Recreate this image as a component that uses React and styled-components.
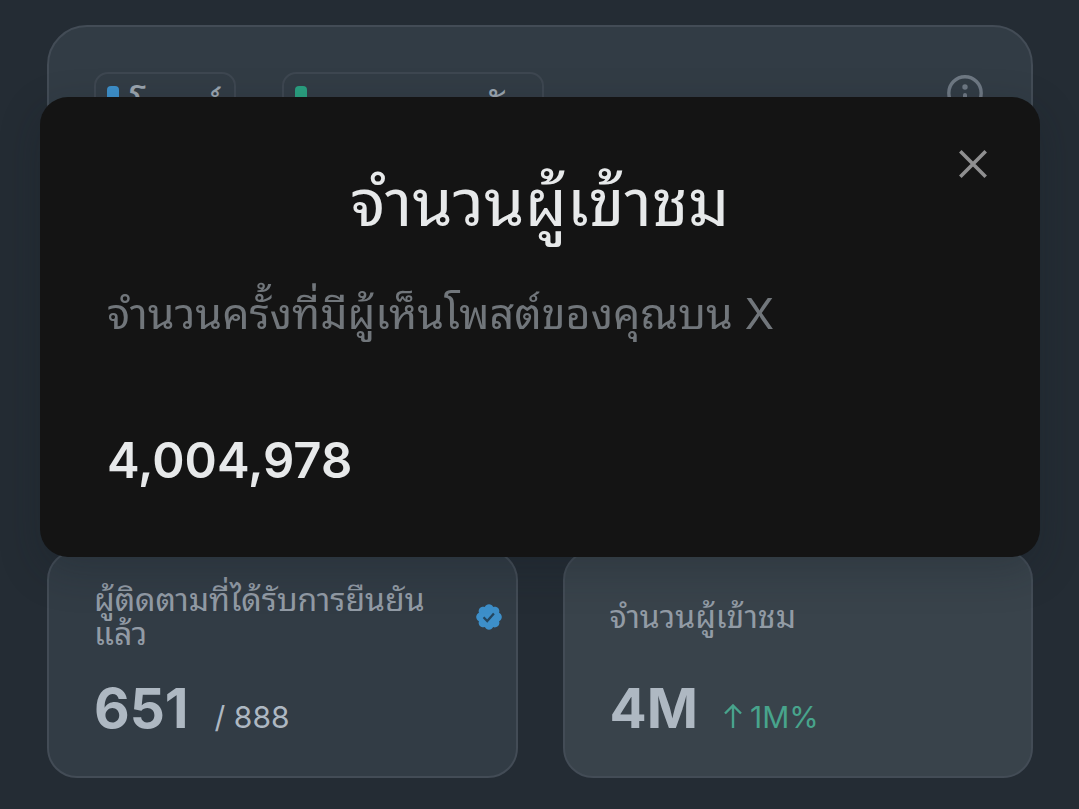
import React, { useState } from "react";
import styled, { createGlobalStyle } from "styled-components";

const App = () => {
  const [isOpen, setOpen] = useState(true);

  return (
    <>
      <GlobalStyle />
      <Page>
        <ChartCard>
          <Legend>
            <Chip>
              <Swatch $color="#3d8fc9" />
              โพสต์
            </Chip>
            <Chip>
              <Swatch $color="#2a9f7f" />
              การตอบกลับ
            </Chip>
          </Legend>
          <InfoButton aria-label="ข้อมูล">
            <InfoIcon />
          </InfoButton>
        </ChartCard>
        <Stats>
          <StatCard>
            <StatHead>
              <StatLabel>ผู้ติดตามที่ได้รับการยืนยันแล้ว</StatLabel>
              <VerifiedBadge />
            </StatHead>
            <StatRow>
              <StatValue>651</StatValue>
              <StatNote>/ 888</StatNote>
            </StatRow>
          </StatCard>
          <StatCard $active>
            <StatHead>
              <StatLabel>จำนวนผู้เข้าชม</StatLabel>
            </StatHead>
            <StatRow>
              <StatValue>4M</StatValue>
              <StatNote $up>
                <ArrowUp />
                1M%
              </StatNote>
            </StatRow>
          </StatCard>
        </Stats>
      </Page>
      {isOpen && (
        <Overlay>
          <Modal role="dialog" aria-labelledby="modal-title">
            <CloseButton aria-label="ปิด" onClick={() => setOpen(false)}>
              <CloseIcon />
            </CloseButton>
            <ModalTitle id="modal-title">จำนวนผู้เข้าชม</ModalTitle>
            <ModalText>จำนวนครั้งที่มีผู้เห็นโพสต์ของคุณบน X</ModalText>
            <ModalValue>4,004,978</ModalValue>
          </Modal>
        </Overlay>
      )}
    </>
  );
};
export default App;

const InfoIcon = () => (
  <svg width="36" height="36" viewBox="0 0 36 36" fill="none">
    <circle cx="18" cy="18" r="16.2" stroke="currentColor" strokeWidth="3.4" />
    <circle cx="18" cy="12" r="2.7" fill="currentColor" />
    <path
      d="M18 20v7"
      stroke="currentColor"
      strokeWidth="4"
      strokeLinecap="round"
    />
  </svg>
);

const CloseIcon = () => (
  <svg width="28" height="28" viewBox="0 0 28 28" fill="none">
    <path d="M1.3 1.3l25.4 25.4M26.7 1.3L1.3 26.7" stroke="currentColor" strokeWidth="3.6" />
  </svg>
);

const ArrowUp = () => (
  <svg width="18" height="24" viewBox="0 0 18 24" fill="none">
    <path
      d="M9 24V1.5M1 9.5l8-8 8 8"
      stroke="currentColor"
      strokeWidth="2.4"
    />
  </svg>
);

const VerifiedBadge = () => (
  <Badge viewBox="0 0 22 22">
    <path
      fill="#3d8fc9"
      d="M20.396 11c-.018-.646-.215-1.275-.57-1.816-.354-.54-.852-.972-1.438-1.246.223-.607.27-1.264.14-1.897-.131-.634-.437-1.218-.882-1.687-.47-.445-1.053-.75-1.687-.882-.633-.13-1.29-.083-1.897.14-.273-.587-.704-1.086-1.245-1.44S11.647 1.62 11 1.604c-.646.017-1.273.213-1.813.568s-.969.854-1.24 1.44c-.608-.223-1.267-.272-1.902-.14-.635.13-1.22.436-1.69.882-.445.47-.749 1.055-.878 1.688-.13.633-.08 1.29.144 1.896-.587.274-1.087.705-1.443 1.245-.356.54-.555 1.17-.574 1.817.02.647.218 1.276.574 1.817.356.54.856.972 1.443 1.245-.224.606-.274 1.263-.144 1.896.13.634.433 1.218.877 1.688.47.443 1.054.747 1.687.878.633.132 1.29.084 1.897-.136.274.586.705 1.084 1.246 1.439.54.354 1.17.551 1.816.569.647-.016 1.276-.213 1.817-.567s.972-.854 1.245-1.44c.604.239 1.266.296 1.903.164.636-.132 1.22-.447 1.68-.907.46-.46.776-1.044.908-1.681s.075-1.299-.165-1.903c.586-.274 1.084-.705 1.439-1.246.354-.54.551-1.17.569-1.816z"
    />
    <path
      d="M7 11.2l2.7 2.7 4.9-5.4"
      fill="none"
      stroke="#24465f"
      strokeWidth="1.7"
    />
  </Badge>
);

const GlobalStyle = createGlobalStyle`
  * {
    box-sizing: border-box;
  }
  body {
    margin: 0;
    background: #242c34;
    font-family: Inter, "Noto Sans Thai Looped", "Noto Sans Thai", "Noto Sans", sans-serif;
  }
  button {
    display: flex;
    padding: 0;
    border: 0;
    background: none;
    cursor: pointer;
  }
`;

const Page = styled.main`
  display: flex;
  flex-direction: column;
  gap: 45px;
  padding: 25px 46px 31px 47px;
`;

const ChartCard = styled.section`
  display: flex;
  justify-content: space-between;
  align-items: flex-start;
  min-height: 480px;
  padding: 45px 48px 45px 45px;
  border: 2px solid #434c56;
  border-radius: 40px;
  background: #323c45;
`;

const Legend = styled.div`
  display: flex;
  gap: 46px;
`;

const Chip = styled.div`
  display: flex;
  align-items: center;
  gap: 11px;
  height: 72px;
  padding: 0 11px;
  border: 2px solid #3e4751;
  border-radius: 14px;
  color: #9aa4ae;
  font-size: 41px;
  line-height: 68px;
  white-space: nowrap;
`;

const Swatch = styled.span`
  width: 12px;
  height: 44px;
  border-radius: 4px;
  background: ${(props) => props.$color};
`;

const InfoButton = styled.button`
  margin-top: 3px;
  color: #6e7883;
`;

const Stats = styled.div`
  display: grid;
  grid-template-columns: 1fr 1fr;
  gap: 45px;
`;

const StatCard = styled.section`
  height: 228px;
  padding: 29px 12px 26px 45px;
  border: 2px solid #434c56;
  border-radius: 30px;
  background: ${(props) => (props.$active ? "#39434b" : "#323c45")};
`;

const StatHead = styled.div`
  display: flex;
  align-items: center;
  justify-content: space-between;
  gap: 40px;
  height: 72px;
`;

const StatLabel = styled.h2`
  margin: 0;
  color: #929ba5;
  font-size: 32px;
  font-weight: 400;
  line-height: 34px;
`;

const Badge = styled.svg`
  flex: none;
  width: 30px;
  height: 30px;
`;

const StatRow = styled.div`
  display: flex;
  align-items: baseline;
  gap: 26px;
  margin-top: 21px;
`;

const StatValue = styled.strong`
  color: #aeb8c2;
  font-size: 55px;
  font-weight: 700;
  line-height: 68px;
`;

const StatNote = styled.span`
  display: flex;
  align-items: baseline;
  gap: 8px;
  color: ${(props) => (props.$up ? "#48a48c" : "#aeb8c2")};
  font-size: 30px;
  line-height: 36px;
`;

const Overlay = styled.div`
  position: fixed;
  inset: 0;
  display: flex;
  align-items: flex-start;
  padding: 97px 39px 0 40px;
`;

const Modal = styled.div`
  position: relative;
  flex: 1;
  min-height: 460px;
  padding: 66px 67px;
  border-radius: 28px;
  background: #141414;
  box-shadow: 0 14px 40px rgba(20, 28, 36, 0.25);
`;

const CloseButton = styled.button`
  position: absolute;
  top: 53px;
  right: 53px;
  color: #8f8f90;
`;

const ModalTitle = styled.h1`
  margin: 0;
  color: #e7e9ea;
  font-size: 65px;
  font-weight: 400;
  line-height: 80px;
  text-align: center;
`;

const ModalText = styled.p`
  margin: 40px 0 0;
  color: #71767b;
  font-size: 43px;
  line-height: 60px;
`;

const ModalValue = styled.p`
  margin: 88px 0 0;
  color: #e7e9ea;
  font-size: 49px;
  font-weight: 600;
  line-height: 60px;
`;
